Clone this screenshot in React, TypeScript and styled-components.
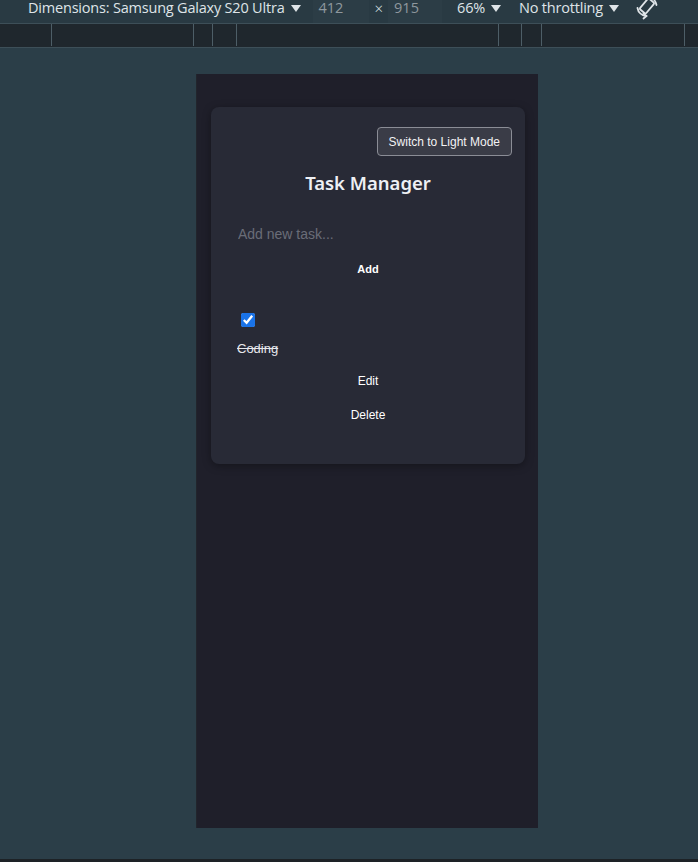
import React from "react";
import styled, { createGlobalStyle } from "styled-components";

const Global = createGlobalStyle`
  html, body { margin: 0; padding: 0; background: #2b3e48; }
  body { width: 698px; height: 862px; overflow: hidden; }
  #root { height: 862px; }
`;

const Page = styled.div`
  display: flex;
  flex-direction: column;
  height: 862px;
  box-sizing: border-box;
  border-bottom: 3px solid #1d2226;
  background: #2b3e48;
`;

const Toolbar = styled.div`
  height: 23px;
  display: flex;
  align-items: flex-start;
  padding-left: 28px;
  background: #293a43;
  border-bottom: 1px solid #3d4f58;
  font-family: "Open Sans", "Noto Sans", sans-serif;
  font-size: 14.5px;
  line-height: 15px;
  color: #dfe4e8;
  white-space: nowrap;
  overflow: hidden;
  box-sizing: content-box;
`;

const Label = styled.span<{ $ml?: number }>`
  margin-left: ${(p) => p.$ml ?? 0}px;
  display: inline-flex;
  align-items: center;
  letter-spacing: -0.2px;
`;

const Caret = styled.span`
  display: inline-block;
  width: 0;
  height: 0;
  border-left: 5px solid transparent;
  border-right: 5px solid transparent;
  border-top: 7px solid #dfe4e8;
  margin-left: 6px;
  margin-top: 2px;
`;

const DimBox = styled.span<{ $ml: number; $w: number }>`
  margin-left: ${(p) => p.$ml}px;
  width: ${(p) => p.$w}px;
  align-self: stretch;
  padding-left: 6px;
  box-sizing: border-box;
  background: #2c3d46;
  color: #8f989e;
`;

const Times = styled.span`
  margin-left: 6px;
  margin-right: 5px;
  margin-top: 1px;
  color: #dfe4e8;
  font-size: 15px;
  font-weight: 300;
`;

const Ruler = styled.div`
  position: relative;
  height: 23px;
  background: #1f272d;
  border-bottom: 1px solid #3d4f58;
`;

const Tick = styled.span`
  position: absolute;
  top: 0;
  width: 1px;
  height: 22px;
  background: #4d5e67;
`;

const Stage = styled.div`
  flex: 1;
  display: flex;
  justify-content: flex-start;
  padding-top: 26px;
  padding-left: 197px;
`;

const Device = styled.div`
  width: 341px;
  height: 754px;
  background: #1f1f2a;
  box-sizing: border-box;
  padding: 33px 13px 0 14px;
  box-shadow: -1px 0 0 #22252c;
`;

const Card = styled.div`
  height: 357px;
  background: #282a36;
  border-radius: 8px;
  box-shadow: 0 2px 8px rgba(0, 0, 0, 0.35);
  box-sizing: border-box;
  padding: 20px 13px 0 26px;
  display: flex;
  flex-direction: column;
  color: #ffffff;
`;

const ToggleRow = styled.div`
  display: flex;
  justify-content: flex-end;
`;

const Toggle = styled.button`
  height: 29px;
  padding: 0 11px;
  background: #3a3c47;
  border: 1px solid #8b8d96;
  border-radius: 4px;
  color: #f2f2f4;
  font-family: "Liberation Sans", Arial, sans-serif;
  font-size: 12px;
`;

const Title = styled.h1`
  margin: 14px 0 0 -13px;
  text-align: center;
  font-family: "Noto Sans", "Open Sans", sans-serif;
  font-weight: 600;
  font-size: 18.5px;
  color: #eef0f4;
  line-height: 26px;
`;

const Input = styled.input`
  margin-top: 27px;
  width: 260px;
  height: 22px;
  padding: 0 0 0 1px;
  background: transparent;
  border: none;
  outline: none;
  font-family: "Liberation Sans", Arial, sans-serif;
  font-size: 14px;
  color: #fff;
  &::placeholder { color: #6a6d78; }
`;

const Center = styled.div<{ $mt: number; $bold?: boolean; $size: number }>`
  margin: ${(p) => p.$mt}px 0 0 -13px;
  text-align: center;
  font-family: "Liberation Sans", Arial, sans-serif;
  font-size: ${(p) => p.$size}px;
  font-weight: ${(p) => (p.$bold ? 700 : 400)};
  line-height: 14px;
  color: #ffffff;
`;

const Check = styled.input`
  margin: 37px 0 0 4px;
  width: 14px;
  height: 14px;
  accent-color: #1a73e8;
`;

const TaskText = styled.div`
  margin-top: 14px;
  font-family: "Liberation Sans", Arial, sans-serif;
  font-size: 13px;
  line-height: 16px;
  color: #e6e7ec;
  text-decoration: line-through;
`;

const Rotate = styled.svg`
  margin-left: 15px;
  margin-top: -4px;
`;

const ticks = [51, 193, 212, 236, 498, 521, 541, 684];

export default function App() {
  return (
    <>
      <Global />
      <Page>
        <Toolbar>
          <Label>
            Dimensions: Samsung Galaxy S20 Ultra
            <Caret />
          </Label>
          <DimBox $ml={12} $w={56}>412</DimBox>
          <Times>×</Times>
          <DimBox $ml={0} $w={54}>915</DimBox>
          <Label $ml={15}>
            66%
            <Caret />
          </Label>
          <Label $ml={18}>
            No throttling
            <Caret />
          </Label>
          <Rotate width="26" height="24" viewBox="0 0 26 24" fill="none" stroke="#dfe4e8" strokeWidth="1.8" strokeLinecap="round">
            <rect x="9" y="3" width="8" height="14" rx="1.5" transform="rotate(40 13 10)" />
            <path d="M3.5 12 A9.5 9.5 0 0 0 12 20" />
            <path d="M9.5 17.5 L12.5 20 L9.5 22.5" />
            <path d="M22.5 9 A9.5 9.5 0 0 0 14 1" />
          </Rotate>
        </Toolbar>
        <Ruler>
          {ticks.map((x) => (
            <Tick key={x} style={{ left: x }} />
          ))}
        </Ruler>
        <Stage>
          <Device>
            <Card>
              <ToggleRow>
                <Toggle>Switch to Light Mode</Toggle>
              </ToggleRow>
              <Title>Task Manager</Title>
              <Input placeholder="Add new task..." />
              <Center $mt={17} $bold $size={11}>Add</Center>
              <Check type="checkbox" defaultChecked />
              <TaskText>Coding</TaskText>
              <Center $mt={17} $size={12}>Edit</Center>
              <Center $mt={20} $size={12}>Delete</Center>
            </Card>
          </Device>
        </Stage>
      </Page>
    </>
  );
}
